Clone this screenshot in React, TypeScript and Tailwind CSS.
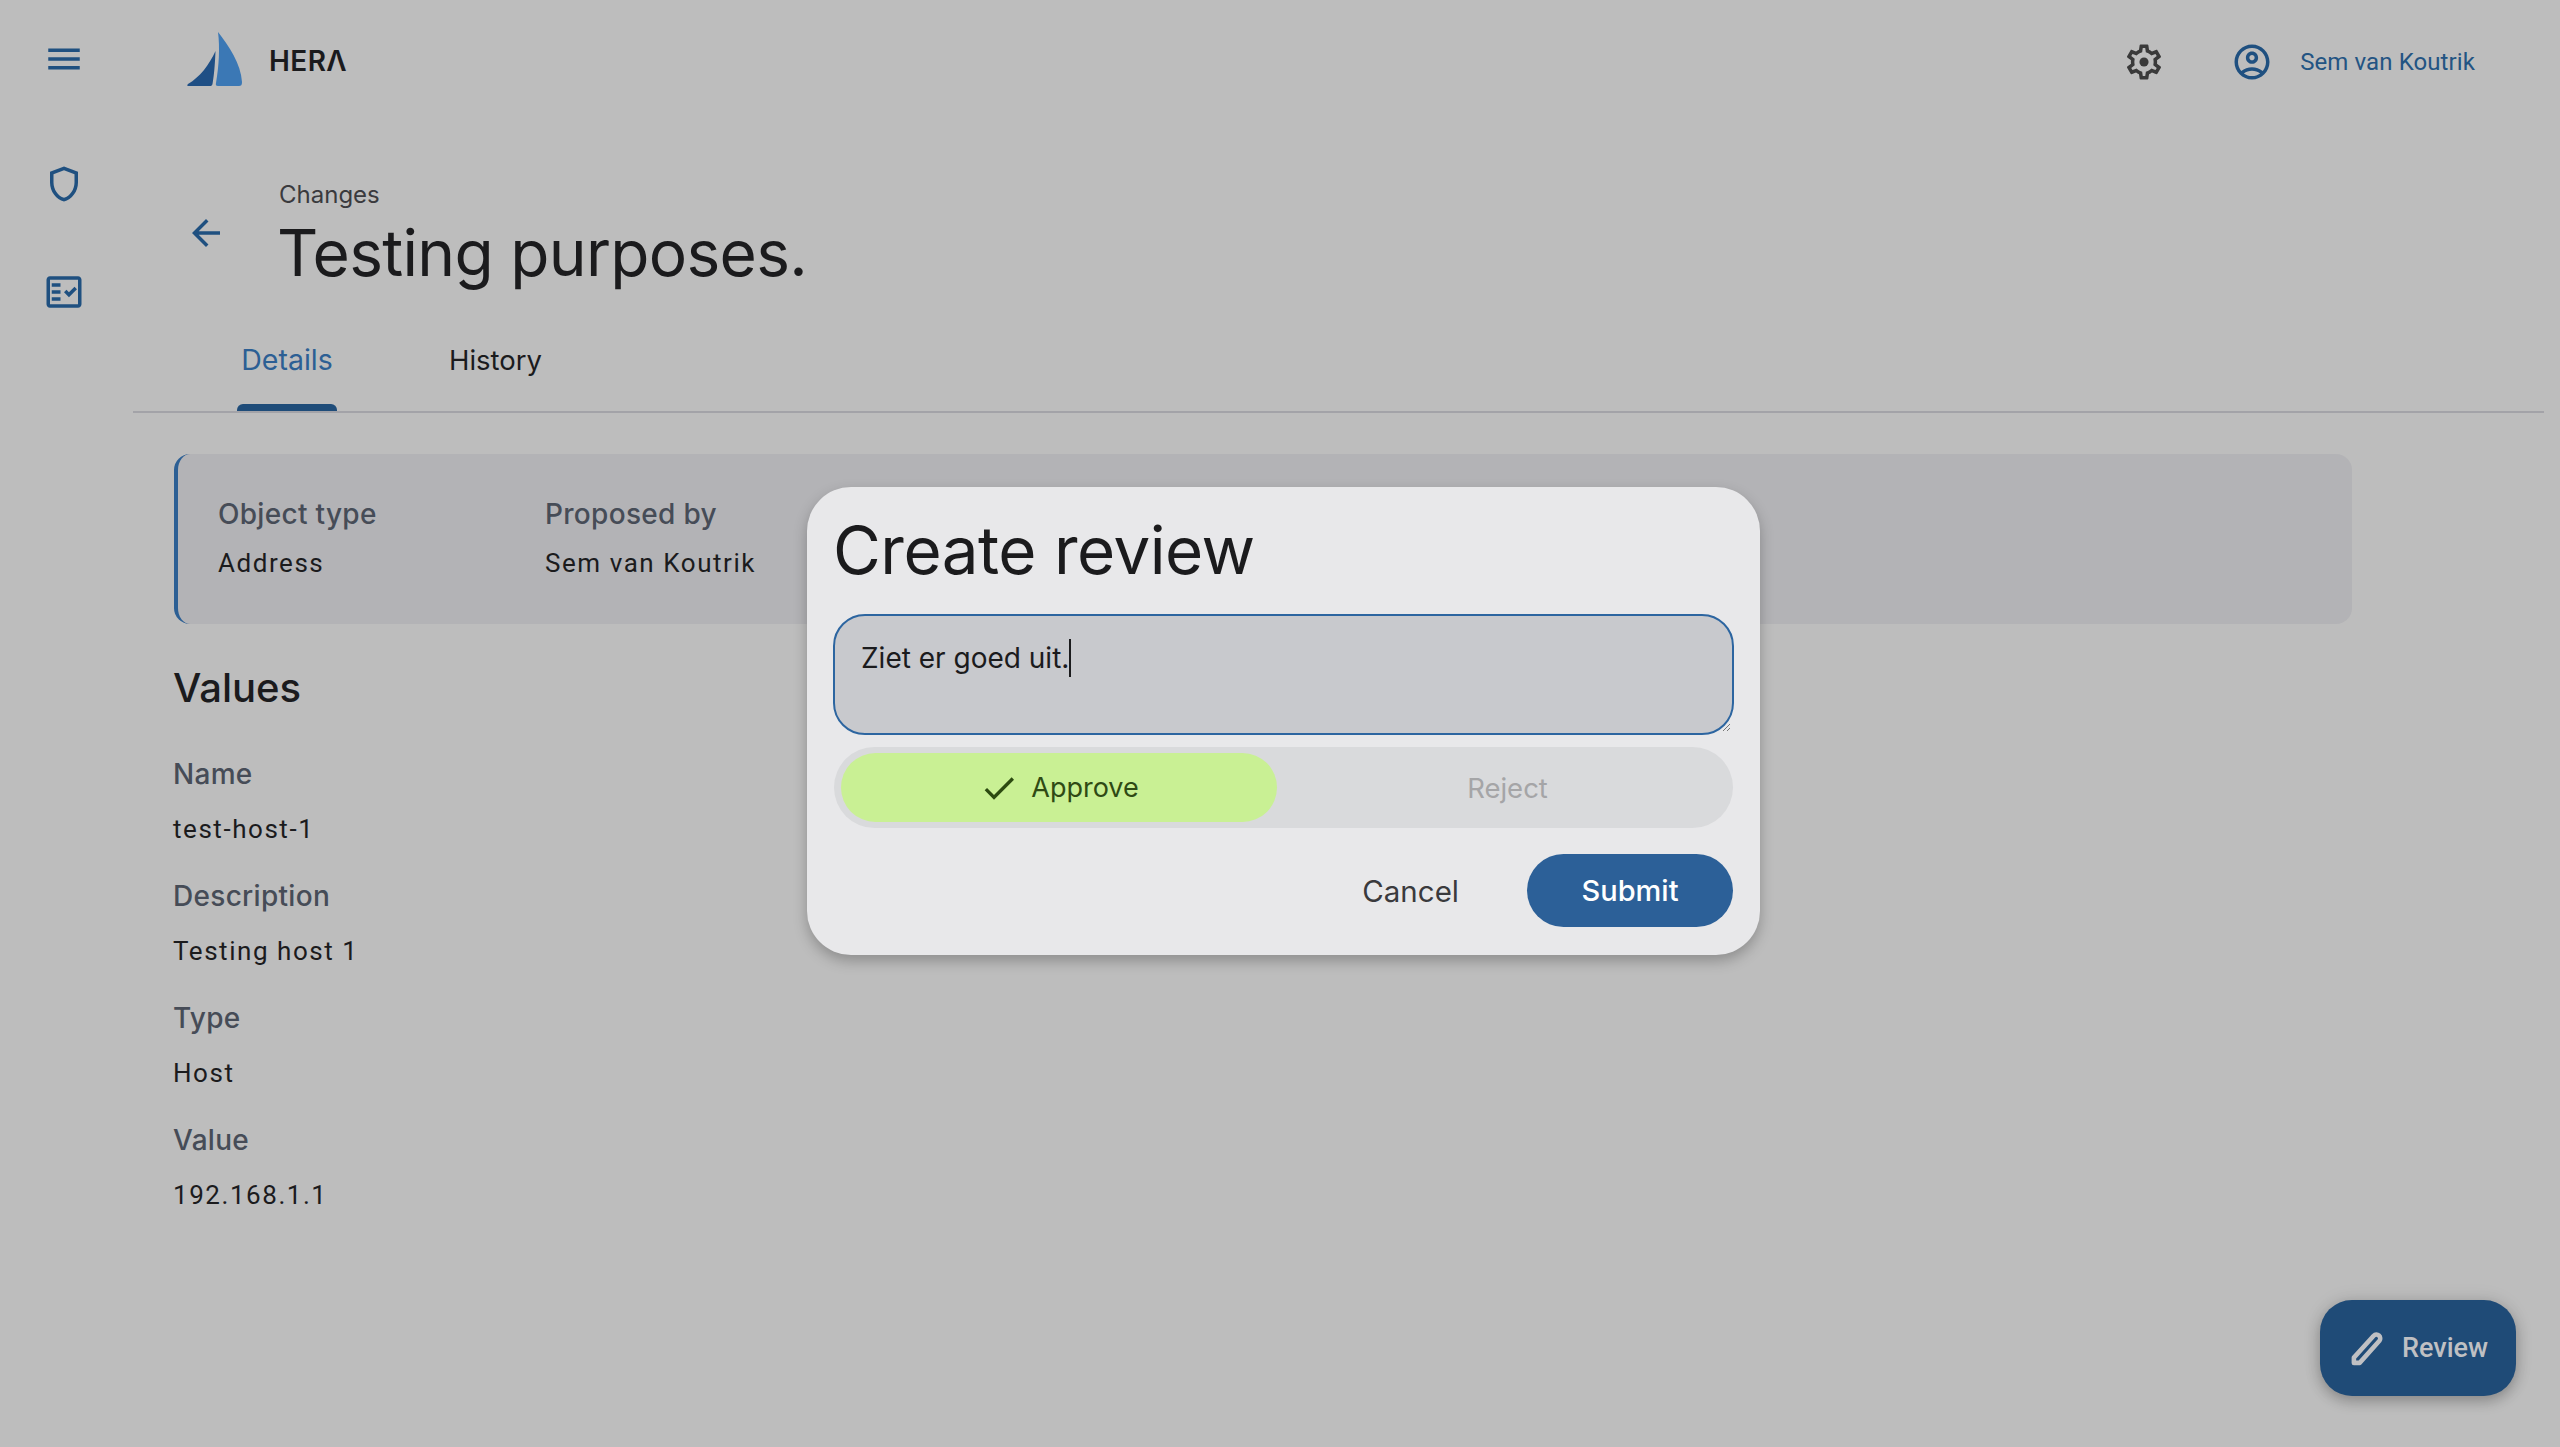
import React from "react";

const P = "font-['Inter','Open_Sans',sans-serif]";

function Icon({ size = 42, color, children, className = "" }: { size?: number; color: string; children: React.ReactNode; className?: string }) {
  return (
    <svg width={size} height={size} viewBox="0 0 24 24" fill={color} className={"block shrink-0 " + className}>
      {children}
    </svg>
  );
}

function Field({ label, value, gap }: { label: string; value: string; gap: string }) {
  return (
    <div className="flex flex-col">
      <div className={P + " text-[28px] leading-[32px] font-medium text-[#464c57] tracking-[0.3px]"}>{label}</div>
      <div className={"font-['Roboto',sans-serif] text-[26px] leading-[32px] text-[#1b1b1d] tracking-[1.55px] " + gap}>{value}</div>
    </div>
  );
}

export default function App() {
  const navy = "#1f5080";
  return (
    <div className="relative flex w-full h-[1447px] overflow-hidden bg-[#bdbdbd]">
      <aside className="w-[133px] shrink-0 flex flex-col items-center pr-[6px]">
        <div className="mt-[38px]">
          <Icon color={navy}><path d="M3 18h18v-2H3v2zm0-5h18v-2H3v2zm0-7v2h18V6H3z" /></Icon>
        </div>
        <div className="mt-[83px]">
          <Icon color={navy}><path d="M12 4.14l6 2.25v4.7c0 4-2.55 7.7-6 8.83-3.45-1.13-6-4.82-6-8.83v-4.7l6-2.25M12 2L4 5v6.09c0 5.05 3.41 9.76 8 10.91 4.59-1.15 8-5.86 8-10.91V5l-8-3z" /></Icon>
        </div>
        <div className="mt-[66px]">
          <Icon color={navy}>
            <path fillRule="evenodd" d="M20,3H4C2.9,3,2,3.9,2,5v14c0,1.1,0.9,2,2,2h16c1.1,0,2-0.9,2-2V5C22,3.9,21.1,3,20,3z M20,19H4V5h16V19z" />
            <path d="M19.41,10.42l-1.42-1.42l-3.17,3.17l-1.41-1.42L12,12.17L14.83,15L19.41,10.42z" />
            <path d="M5 7h5v2H5zM5 11h5v2H5zM5 15h5v2H5z" />
          </Icon>
        </div>
      </aside>

      <main className="flex-1 flex flex-col mr-[16px] min-w-0">
        <header className="h-[118px] flex items-center justify-between pl-[54px] pr-[69px]">
          <div className="flex items-center">
            <svg width="56" height="55" viewBox="0 0 56 55" className="block">
              <path d="M31 0 C42 14 54 32 55 50 C55 53 54 54 52 54 L31 54 C29 54 28.500 53 29 51 C32 34 33 16 31 0 Z" fill="#3b78b5" />
              <path d="M28.500 19 C28 32 27 44 25.500 52 C25 53.500 24.500 54 23 54 L1 54 C0 54 0 53 1 52 C13 45 22 33 28.500 19 Z" fill="#1f4f85" />
            </svg>
            <span className="ml-[26px] mt-[4px] font-['Inter',sans-serif] font-semibold text-[28px] leading-none tracking-[0.4px] text-[#1b1b1d]">HERΛ</span>
          </div>
          <div className="flex items-center mt-[6px]">
            <Icon color="#3a3a3a">
              <path d="M19.43 12.98c.04-.32.07-.64.07-.98 0-.34-.03-.66-.07-.98l2.11-1.65c.19-.15.24-.42.12-.64l-2-3.46c-.09-.16-.26-.25-.44-.25-.06 0-.12.01-.17.03l-2.49 1c-.52-.4-1.08-.73-1.69-.98l-.38-2.65C14.46 2.18 14.25 2 14 2h-4c-.25 0-.46.18-.49.42l-.38 2.65c-.61.25-1.17.59-1.69.98l-2.49-1c-.06-.02-.12-.03-.18-.03-.17 0-.34.09-.43.25l-2 3.46c-.13.22-.07.49.12.64l2.11 1.65c-.04.32-.07.65-.07.98 0 .33.03.66.07.98l-2.11 1.65c-.19.15-.24.42-.12.64l2 3.46c.09.16.26.25.44.25.06 0 .12-.01.17-.03l2.49-1c.52.4 1.08.73 1.69.98l.38 2.65c.03.24.24.42.49.42h4c.25 0 .46-.18.49-.42l.38-2.65c.61-.25 1.17-.59 1.69-.98l2.49 1c.06.02.12.03.18.03.17 0 .34-.09.43-.25l2-3.46c.12-.22.07-.49-.12-.64l-2.11-1.65zm-1.98-1.71c.04.31.05.52.05.73 0 .21-.02.43-.05.73l-.14 1.13.89.7 1.08.84-.7 1.21-1.27-.51-1.04-.42-.9.68c-.43.32-.84.56-1.25.73l-1.06.43-.16 1.13-.2 1.35h-1.4l-.19-1.35-.16-1.13-1.06-.43c-.43-.18-.83-.41-1.23-.71l-.91-.7-1.06.43-1.27.51-.7-1.21 1.08-.84.89-.7-.14-1.13c-.03-.31-.05-.54-.05-.74s.02-.43.05-.73l.14-1.13-.89-.7-1.08-.84.7-1.21 1.27.51 1.04.42.9-.68c.43-.32.84-.56 1.25-.73l1.06-.43.16-1.13.2-1.35h1.39l.19 1.35.16 1.13 1.06.43c.43.18.83.41 1.23.71l.91.7 1.06-.43 1.27-.51.7 1.21-1.07.85-.89.7.14 1.13z" />
              <circle cx="12" cy="12" r="2.6" />
            </Icon>
            <Icon color={navy} className="ml-[66px]">
              <path d="M12 2C6.48 2 2 6.48 2 12s4.48 10 10 10 10-4.48 10-10S17.52 2 12 2zM7.35 18.5C8.66 17.56 10.26 17 12 17s3.34.56 4.65 1.5c-1.31.94-2.91 1.5-4.65 1.5s-3.34-.56-4.65-1.5zm10.79-1.38C16.45 15.8 14.32 15 12 15s-4.45.8-6.14 2.12C4.7 15.73 4 13.95 4 12c0-4.42 3.58-8 8-8s8 3.58 8 8c0 1.95-.7 3.73-1.86 5.12z" />
              <path d="M12 6c-1.93 0-3.5 1.57-3.5 3.5S10.07 13 12 13s3.5-1.57 3.5-3.5S13.93 6 12 6zm0 5c-.83 0-1.5-.67-1.5-1.5S11.17 8 12 8s1.5.67 1.5 1.5S12.83 11 12 11z" />
            </Icon>
            <span className="ml-[27px] font-['Roboto',sans-serif] text-[24px] leading-[32px] text-[#235483] tracking-[0.1px]">Sem van Koutrik</span>
          </div>
        </header>

        <section className="flex items-center pl-[52px] mt-[63px]">
          <Icon color={navy} className="mt-[-7px]"><path d="M20 11H7.83l5.59-5.59L12 4l-8 8 8 8 1.41-1.41L7.83 13H20v-2z" /></Icon>
          <div className="ml-[52px] flex flex-col">
            <div className={P + " text-[24px] leading-[28px] text-[#3a3a3d]"}>Changes</div>
            <h1 className={P + " mt-[6px] -ml-[2px] text-[64px] leading-[76px] text-[#1b1b1d] tracking-[-0.7px]"}>Testing purposes.</h1>
          </div>
        </section>

        <nav className="relative mt-[28px] h-[92px] flex pl-[105px] border-b-2 border-[#a3a3a8] box-content">
          <div className="relative w-[100px] flex justify-center pt-[23px] -ml-[1px]">
            <span className={P + " text-[28.5px] leading-[36px] text-[#2c5f94]"}>Details</span>
            <span className="absolute left-0 right-0 bottom-0 h-[7px] rounded-t-[6px] bg-[#1f4c79]"></span>
          </div>
          <div className="ml-[112px] pt-[23px]">
            <span className={P + " text-[27.5px] leading-[36px] text-[#1b1b1d]"}>History</span>
          </div>
        </nav>

        <section className="ml-[41px] w-[2178px] mt-[41px] h-[170px] shrink-0 flex rounded-[16px] border-l-[4px] border-[#2c5f94] bg-[#b3b3b6] pl-[40px] pt-[44px]">
          <div className="w-[327px]">
            <Field label="Object type" value="Address" gap="mt-[17px]" />
          </div>
          <div>
            <Field label="Proposed by" value="Sem van Koutrik" gap="mt-[17px]" />
          </div>
        </section>

        <section className="ml-[40px] mt-[40px] flex flex-col">
          <h2 className={P + " text-[40px] leading-[48px] font-medium text-[#1b1b1d]"}>Values</h2>
          <div className="mt-[46px] flex flex-col gap-[35px]">
            <Field label="Name" value="test-host-1" gap="mt-[23px]" />
            <Field label="Description" value="Testing host 1" gap="mt-[23px]" />
            <Field label="Type" value="Host" gap="mt-[23px]" />
            <Field label="Value" value="192.168.1.1" gap="mt-[23px]" />
          </div>
        </section>
      </main>

      <div className="absolute left-[807px] top-[487px] w-[953px] h-[468px] rounded-[44px] bg-[#e8e8ea] shadow-[0_6px_14px_rgba(0,0,0,0.25)] px-[27px] pt-[26px] flex flex-col">
        <h2 className={P + " -ml-[1px] text-[65.5px] leading-[76px] text-[#1b1b1d] tracking-[-0.5px] whitespace-nowrap"}>Create review</h2>
        <div className="relative mt-[25px] -mx-[1px] h-[121px] rounded-[32px] border-2 border-[#2c65a0] bg-[#c8c9cd] pl-[26px] pt-[23px]">
          <div className="flex items-start">
            <span className={P + " text-[28px] leading-[38px] text-[#1b1b1d]"}>Ziet er goed uit.</span>
            <span className="w-[1.5px] h-[38px] bg-[#1b1b1d]"></span>
          </div>
          <svg width="10" height="10" viewBox="0 0 10 10" className="absolute right-[1px] bottom-[1px]">
            <path d="M2 9 L9 2 M6 9 L9 6" stroke="#777" strokeWidth="1" />
          </svg>
        </div>
        <div className="mt-[12px] h-[81px] rounded-full bg-[#d9dadc] flex items-center px-[7px]">
          <div className="w-[436px] h-[69px] rounded-full bg-[#c9f094] flex items-center justify-center">
            <Icon size={40} color="#2c4a10"><path d="M9 16.17 4.83 12l-1.42 1.41L9 19 21 7l-1.41-1.41z" /></Icon>
            <span className={P + " ml-[12px] text-[27px] leading-[36px] text-[#2f4a14]"}>Approve</span>
          </div>
          <div className="flex-1 flex justify-center pl-[12px]">
            <span className={P + " text-[27.5px] leading-[36px] text-[#a5a5a7]"}>Reject</span>
          </div>
        </div>
        <div className="mt-[26px] flex items-center justify-end">
          <span className={P + " text-[29.5px] leading-[36px] text-[#3a3a3d]"}>Cancel</span>
          <div className="ml-[68px] w-[206px] h-[73px] rounded-full bg-[#2c6098] flex items-center justify-center">
            <span className={P + " text-[29px] leading-[36px] font-medium text-white"}>Submit</span>
          </div>
        </div>
      </div>

      <div className="absolute right-[44px] bottom-[51px] w-[196px] h-[96px] rounded-[32px] bg-[#1f4b77] shadow-[0_5px_14px_rgba(0,0,0,0.25),0_0_20px_rgba(0,0,0,0.08)] flex items-center pl-[26px]">
        <Icon color="none">
          <path d="M4.500 20.500 L4.500 17.500 L15.800 5 a2.200 2.200 0 0 1 3.300 2.900 L7.800 20.500 Z" stroke="#bfc0c3" strokeWidth="2.600" strokeLinejoin="round" />
        </Icon>
        <span className="ml-[14px] font-['Roboto',sans-serif] font-medium text-[27px] leading-[36px] text-[#bfc0c3]">Review</span>
      </div>
    </div>
  );
}
